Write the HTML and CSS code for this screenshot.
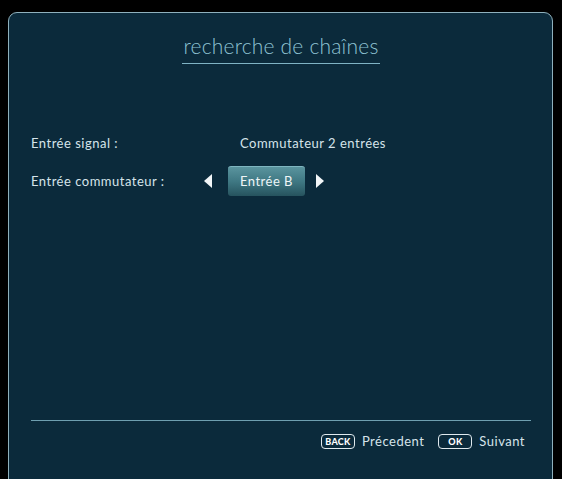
FILE: index.html
```html
<!DOCTYPE html>
<html lang="fr">
<head>
    <meta charset="UTF-8">
    <title>Recherche de chaînes</title>
    <link rel="stylesheet" href="styles.css">
</head>
<body>

<div class="panel">
    <div class="title-wrap">
        <h1 class="title">recherche de chaînes</h1>
    </div>

    <div class="settings">
        <div class="row">
            <span class="label">Entrée signal :</span>
            <span class="value">Commutateur 2 entrées</span>
        </div>
        <div class="row">
            <span class="label">Entrée commutateur :</span>
            <div class="selector">
                <span class="arrow arrow-left"></span>
                <span class="choice">Entrée B</span>
                <span class="arrow arrow-right"></span>
            </div>
        </div>
    </div>

    <div class="footer">
        <span class="key key-back">BACK</span>
        <span class="hint">Précedent</span>
        <span class="key key-ok">OK</span>
        <span class="hint">Suivant</span>
    </div>
</div>

</body>
</html>
```

FILE: styles.css
```css
body {
    margin: 0;
    padding: 12px 0 0 8px;
    background-color: #000;
    font-family: Lato, "Open Sans", sans-serif;
    color: #d6e4ea;
    height: 479px;
    overflow: hidden;
    box-sizing: border-box;
}

.panel {
    width: 545px;
    height: 480px;
    box-sizing: border-box;
    background-color: #0b2a3b;
    border: 1px solid #8fb1bd;
    border-radius: 9px;
    padding: 0 21px 0 22px;
    display: flex;
    flex-direction: column;
}

.title-wrap {
    display: flex;
    justify-content: center;
    padding-top: 20px;
}

.title {
    margin: 0;
    font-size: 21px;
    font-weight: 300;
    letter-spacing: 0.2px;
    color: #8fc3d3;
    line-height: 26px;
    padding: 0 1px 4px;
    border-bottom: 1px solid #7fb3c4;
}

.settings {
    display: flex;
    flex-direction: column;
    gap: 8px;
    margin-top: 64px;
    flex: 1;
}

.row {
    display: flex;
    align-items: center;
    height: 30px;
    font-size: 13px;
    letter-spacing: 0.5px;
}

.label {
    width: 209px;
}

.selector {
    display: flex;
    align-items: center;
    margin-left: -36px;
}

.arrow {
    width: 0;
    height: 0;
    border-top: 7px solid transparent;
    border-bottom: 7px solid transparent;
}

.arrow-left {
    border-right: 8px solid #f2f6f8;
}

.arrow-right {
    border-left: 8px solid #f2f6f8;
}

.choice {
    margin: 0 11px 0 16px;
    width: 77px;
    height: 30px;
    line-height: 28px;
    box-sizing: border-box;
    text-align: center;
    border-radius: 3px;
    border-top: 1px solid #7fb6c0;
    background: linear-gradient(to bottom, #5a949e 0%, #3f7883 50%, #26535e 100%);
    color: #eef5f7;
}

.footer {
    display: flex;
    align-items: center;
    justify-content: flex-end;
    border-top: 1px solid #6f9fb0;
    margin-bottom: 42px;
    padding: 12px 6px 0 0;
    font-size: 13px;
    letter-spacing: 0.5px;
}

.key {
    border: 1px solid #dfe9ee;
    border-radius: 4px;
    font-size: 9px;
    font-weight: 900;
    line-height: 13px;
    letter-spacing: 0.3px;
    color: #ffffff;
    text-align: center;
    box-sizing: border-box;
    width: 34px;
}

.hint {
    margin-left: 7px;
}

.hint + .key {
    margin-left: 14px;
}
```
